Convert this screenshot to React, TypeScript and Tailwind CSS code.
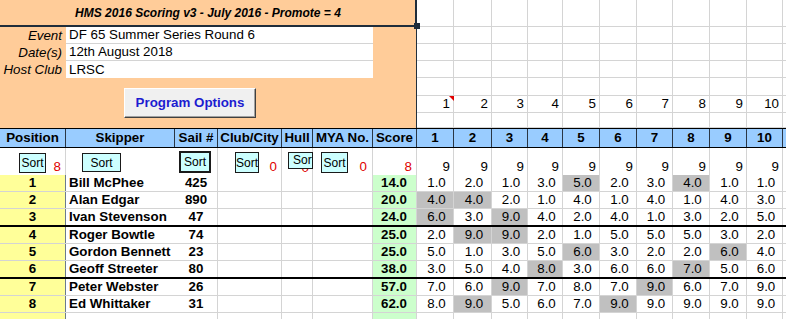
import React from "react";

type Row = { pos: number; name: string; sail: string; score: string; r: string[]; g: number[]; thick?: boolean };

const rows: Row[] = [
  { pos: 1, name: "Bill McPhee", sail: "425", score: "14.0", r: ["1.0", "2.0", "1.0", "3.0", "5.0", "2.0", "3.0", "4.0", "1.0", "1.0"], g: [4, 7] },
  { pos: 2, name: "Alan Edgar", sail: "890", score: "20.0", r: ["4.0", "4.0", "2.0", "1.0", "4.0", "1.0", "4.0", "1.0", "4.0", "3.0"], g: [0, 1] },
  { pos: 3, name: "Ivan Stevenson", sail: "47", score: "24.0", r: ["6.0", "3.0", "9.0", "4.0", "2.0", "4.0", "1.0", "3.0", "2.0", "5.0"], g: [0, 2], thick: true },
  { pos: 4, name: "Roger Bowtle", sail: "74", score: "25.0", r: ["2.0", "9.0", "9.0", "2.0", "1.0", "5.0", "5.0", "5.0", "3.0", "2.0"], g: [1, 2] },
  { pos: 5, name: "Gordon Bennett", sail: "23", score: "25.0", r: ["5.0", "1.0", "3.0", "5.0", "6.0", "3.0", "2.0", "2.0", "6.0", "4.0"], g: [4, 8] },
  { pos: 6, name: "Geoff Streeter", sail: "80", score: "38.0", r: ["3.0", "5.0", "4.0", "8.0", "3.0", "6.0", "6.0", "7.0", "5.0", "6.0"], g: [3, 7], thick: true },
  { pos: 7, name: "Peter Webster", sail: "26", score: "57.0", r: ["7.0", "6.0", "9.0", "7.0", "8.0", "7.0", "9.0", "6.0", "7.0", "9.0"], g: [2, 6] },
  { pos: 8, name: "Ed Whittaker", sail: "31", score: "62.0", r: ["8.0", "9.0", "5.0", "6.0", "7.0", "9.0", "9.0", "9.0", "9.0", "9.0"], g: [1, 5] },
];

const GRID =
  "grid grid-cols-[66px_109px_43px_64px_31px_60px_44px_37px_38px_36px_35px_37px_37px_36px_37px_37px_36px_1fr]";
const RGRID = "grid grid-cols-[37px_38px_36px_35px_37px_37px_36px_37px_37px_36px_1fr]";
const races = ["1", "2", "3", "4", "5", "6", "7", "8", "9", "10"];
const LINE = "border-[#d4d4d4]";

function SortBtn({ cls }: { cls: string }) {
  return (
    <div
      className={`absolute flex items-center bg-[#ccffff] border border-[#1a1a1a] text-[12px] leading-none text-black overflow-hidden whitespace-nowrap ${cls}`}
    >
      Sort
    </div>
  );
}

export default function App() {
  const topRightHeights = ["h-[27px]", "h-[17px]", "h-[17px]", "h-[17px]", "h-[18px]", "h-[17px]", "h-[15px]"];
  return (
    <div className="w-[786px] h-[319px] overflow-hidden bg-white font-['Liberation_Sans',Arial,sans-serif] text-black">
      {/* Top section */}
      <div className="flex h-[128px]">
        <div className="relative w-[417px] shrink-0 bg-[#ffcc99] border-r border-[#22303e] flex flex-col">
          <div className="h-[27px] border-b-2 border-[#1f2d3b] flex items-center justify-center font-bold italic text-[12px] leading-none">
            HMS 2016 Scoring v3 - July 2016 - Promote = 4
          </div>
          <div className="absolute right-[-4px] top-[23px] w-[6px] h-[6px] bg-[#1f2d3b]" />
          <div className="absolute right-[-1px] top-0 w-[2px] h-[27px] bg-[#1f2d3b]" />
          {[
            ["Event", "DF 65 Summer Series Round 6"],
            ["Date(s)", "12th August 2018"],
            ["Host Club", "LRSC"],
          ].map(([l, v], i) => (
            <div key={l} className="flex h-[17px] text-[13.33px] leading-none">
              <div className="w-[66px] flex items-center justify-end pr-[4px] italic">{l}</div>
              <div
                className={`w-[307px] bg-white flex items-center pl-[3px] ${i < 2 ? `border-b ${LINE}` : ""}`}
              >
                {v}
              </div>
            </div>
          ))}
          <div className="flex-1 pt-[10px] pl-[124px]">
            <div className="w-[132px] h-[30px] bg-[#f0f0f0] border border-t-white border-l-white border-b-[#404040] border-r-[#404040] shadow-[inset_-1px_-1px_0_#a0a0a0] flex items-center justify-center font-bold text-[13.33px] text-[#1c1cd0] leading-none">
              Program Options
            </div>
          </div>
        </div>
        <div className="flex-1 flex flex-col">
          {topRightHeights.map((h, ri) => (
            <div key={ri} className={`${RGRID} ${h} border-b ${LINE}`}>
              {races.map((n, ci) => (
                <div
                  key={n}
                  className={`relative border-r ${LINE} flex items-center justify-end pr-[3px] text-[13.33px] leading-none`}
                >
                  {ri === 5 ? n : ""}
                  {ri === 5 && ci === 0 ? (
                    <div className="absolute top-0 right-[-1px] w-0 h-0 border-l-[5px] border-l-transparent border-t-[5px] border-t-[#e00000]" />
                  ) : null}
                </div>
              ))}
              <div />
            </div>
          ))}
        </div>
      </div>

      {/* Header row */}
      <div className={`${GRID} h-[20px] border-y border-black`}>
        {["Position", "Skipper", "Sail #", "Club/City", "Hull", "MYA No.", "Score", ...races].map((h) => (
          <div
            key={h}
            className="bg-[#99ccff] border-r border-[#2a3644] flex items-center justify-center font-bold text-[13.33px] leading-none"
          >
            {h}
          </div>
        ))}
        <div className="bg-[#99ccff]" />
      </div>

      {/* Sort row */}
      <div className={`${GRID} h-[27px]`}>
        <div className={`relative border-r ${LINE} flex items-end justify-end pr-[4px] pb-[2px] text-[13.33px] leading-none text-[#e00000]`}>
          8
          <SortBtn cls="left-[19px] top-[5px] w-[27px] h-[20px] justify-center" />
        </div>
        <div className="relative">
          <SortBtn cls="left-[16px] top-[5px] w-[39px] h-[19px] justify-center" />
        </div>
        <div className={`relative border-r ${LINE}`}>
          <SortBtn cls="left-[4px] top-[3px] w-[32px] h-[22px] border-2 justify-center" />
        </div>
        <div className={`relative border-r ${LINE} flex items-end justify-end pr-[4px] pb-[2px] text-[13.33px] leading-none text-[#e00000]`}>
          0
          <SortBtn cls="left-[17px] top-[4px] w-[24px] h-[21px] justify-center" />
        </div>
        <div className={`relative border-r ${LINE} flex items-end justify-end pr-[3px] pb-[1px] text-[13.33px] leading-none text-[#e00000]`}>
          0
          <SortBtn cls="left-[6px] top-[4px] w-[25px] h-[17px] justify-start pl-[4px] pb-[2px]" />
        </div>
        <div className={`relative border-r ${LINE} flex items-end justify-end pr-[5px] pb-[2px] text-[13.33px] leading-none text-[#e00000]`}>
          0
          <SortBtn cls="left-[8px] top-[4px] w-[27px] h-[21px] justify-center" />
        </div>
        <div className={`relative border-r ${LINE} flex items-end justify-end pr-[4px] pb-[2px] text-[13.33px] leading-none text-[#e00000]`}>
          8
        </div>
        {races.map((n) => (
          <div key={n} className={`border-r ${LINE} flex items-end justify-end pr-[3px] pb-[2px] text-[13.33px] leading-none`}>
            9
          </div>
        ))}
        <div />
      </div>

      {/* Data rows */}
      {rows.map((r) => (
        <div
          key={r.pos}
          className={`${GRID} ${r.thick ? "h-[18px] border-b-2 border-black" : `h-[17px] border-b ${LINE}`} text-[13.33px] leading-none`}
        >
          <div className="bg-[#ffff99] border-r border-[#6b7b8f] flex items-center justify-center font-bold">{r.pos}</div>
          <div className="flex items-center pl-[3px] font-bold whitespace-nowrap">{r.name}</div>
          <div className={`border-r ${LINE} flex items-center justify-center font-bold`}>{r.sail}</div>
          <div className={`border-r ${LINE}`} />
          <div className={`border-r ${LINE}`} />
          <div className={`border-r ${LINE}`} />
          <div className={`bg-[#ccffcc] border-r ${LINE} flex items-center justify-end pr-[9px] font-bold`}>{r.score}</div>
          {r.r.map((v, i) => (
            <div
              key={i}
              className={`border-r ${LINE} flex items-center justify-center pl-[3px] ${r.g.includes(i) ? "bg-[#c0c0c0]" : ""}`}
            >
              {v}
            </div>
          ))}
          <div />
        </div>
      ))}
      <div className={`${GRID} h-[17px] border-b ${LINE}`}>
        <div className="bg-[#ffff99] border-r border-[#6b7b8f]" />
        <div />
        <div className={`border-r ${LINE}`} />
        <div className={`border-r ${LINE}`} />
        <div className={`border-r ${LINE}`} />
        <div className={`border-r ${LINE}`} />
        <div className={`bg-[#ccffcc] border-r ${LINE}`} />
        {races.map((n) => (
          <div key={n} className={`border-r ${LINE}`} />
        ))}
        <div />
      </div>
    </div>
  );
}
